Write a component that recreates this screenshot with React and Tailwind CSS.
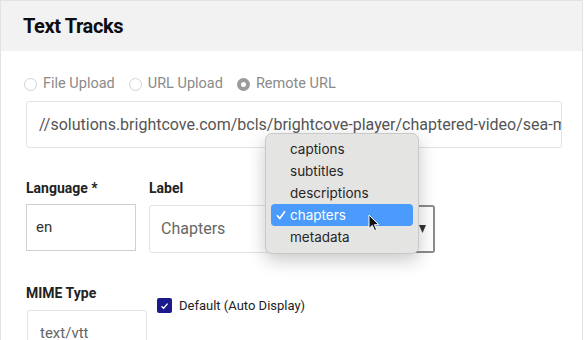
import { useState } from "react";

const opciones = ["captions", "subtitles", "descriptions", "chapters", "metadata"];

export default function App() {
  const [fuente] = useState("remote");
  const [elegido] = useState("chapters");

  return (
    <div className="relative w-[584px] h-[340px] overflow-hidden bg-white font-['Roboto',sans-serif] text-[#222]">
      <div className="w-[583px] h-[360px] border border-[#e2e2e2]">
        {/* Cabecera */}
        <div className="h-[50px] bg-[#f2f2f2] px-[22px] flex items-center">
          <h1 className="text-[20px] font-bold text-[#0d0d12] tracking-[-0.4px]">Text Tracks</h1>
        </div>

        <div className="pl-[24px] pt-[23px]">
          {/* Radios */}
          <div className="-ml-[1px] flex items-center h-[20px] text-[14.5px] text-[#8a8a8a]">
            {[
              ["file", "File Upload"],
              ["url", "URL Upload"],
              ["remote", "Remote URL"],
            ].map(([id, txt]) => (
              <label key={id} className="flex items-center shrink-0 whitespace-nowrap mr-[14px]">
                {fuente === id ? (
                  <span className="shrink-0 w-[13px] h-[13px] rounded-full bg-[#9a9a9a] flex items-center justify-center mr-[6px]">
                    <span className="w-[5px] h-[5px] rounded-full bg-white" />
                  </span>
                ) : (
                  <span className="shrink-0 w-[13px] h-[13px] rounded-full border border-[#d3d3d3] mr-[6px]" />
                )}
                {txt}
              </label>
            ))}
          </div>

          {/* URL */}
          <div className="mt-[7px] ml-[1px] w-[536px] h-[47px] border border-[#e3e3e3] rounded-[3px] px-[12px] flex items-center overflow-hidden whitespace-nowrap text-[16px] text-[#555]">
            //solutions.brightcove.com/bcls/brightcove-player/chaptered-video/sea-marine.vtt
          </div>

          {/* Idioma y etiqueta */}
          <div className="mt-[31px] ml-[1px] flex gap-[13px]">
            <div>
              <div className="text-[14px] font-bold h-[18px] leading-[18px]">Language *</div>
              <div className="mt-[7px] w-[110px] h-[47px] border border-[#cfcfcf] px-[9px] flex items-center text-[15px] text-[#333]">
                en
              </div>
            </div>
            <div>
              <div className="text-[14px] font-bold h-[18px] leading-[18px]">Label</div>
              <div className="relative mt-[8px] w-[286px] h-[48px] border border-[#e3e3e3] rounded-[3px] px-[11px] flex items-center text-[16px] text-[#666]">
                Chapters
                <span className="absolute right-[-1px] top-[-1px] bottom-[-1px] w-[40px] border-y-2 border-r-2 border-[#8c8c8c] rounded-r-[3px]" />
                <svg className="absolute right-[8px] top-[19px]" width="7" height="8" viewBox="0 0 7 8">
                  <path d="M0 0 L7 0 L3.5 8 Z" fill="#333" />
                </svg>
              </div>
            </div>
          </div>

          {/* MIME y por defecto */}
          <div className="mt-[31px] ml-[1px] flex">
            <div>
              <div className="text-[14px] font-bold h-[18px] leading-[18px]">MIME Type</div>
              <div className="mt-[8px] ml-[1px] w-[120px] h-[47px] border border-[#e3e3e3] rounded-[3px] px-[12px] flex items-center text-[15px] text-[#666]">
                text/vtt
              </div>
            </div>
            <label className="ml-[10px] mt-[14px] flex items-start h-[16px]">
              <span className="w-[15px] h-[15px] rounded-[2px] bg-[#1c1a8a] flex items-center justify-center">
                <svg width="9" height="8" viewBox="0 0 9 8">
                  <path d="M1.5 4.2 L3.6 6.2 L7.6 1.6" fill="none" stroke="white" strokeWidth="1.3" />
                </svg>
              </span>
              <span className="ml-[7px] text-[13px] leading-[15px] text-[#222]">Default (Auto Display)</span>
            </label>
          </div>
        </div>
      </div>

      {/* Menú desplegable */}
      <div className="absolute left-[265px] top-[133px] w-[154px] h-[121px] rounded-[7px] bg-[#e4e4e3] border border-[#c9c9c9] shadow-[0_6px_18px_rgba(0,0,0,0.22)] pt-[4px] px-[5px] font-['Inter',sans-serif]">
        {opciones.map((o) => (
          <div
            key={o}
            className={
              o === elegido
                ? "relative h-[22px] rounded-[4px] bg-[#4a9bfb] text-white flex items-center pl-[19px] text-[13.5px]"
                : "h-[22px] flex items-center pl-[19px] text-[13.5px] text-[#262626]"
            }
          >
            {o === elegido && (
              <svg className="absolute left-[5px] top-[6px]" width="10" height="10" viewBox="0 0 10 10">
                <path d="M1 5.3 L3.8 8.5 L9 1.2" fill="none" stroke="white" strokeWidth="1.6" />
              </svg>
            )}
            {o}
          </div>
        ))}
      </div>

      {/* Cursor */}
      <svg className="absolute left-[368px] top-[214px]" width="12" height="18" viewBox="0 0 12 18">
        <path d="M1 1 L1 14.5 L4.3 11.4 L6.6 16.6 L8.6 15.7 L6.4 10.7 L10.8 10.7 Z" fill="#111" stroke="white" strokeWidth="1" />
      </svg>
    </div>
  );
}
